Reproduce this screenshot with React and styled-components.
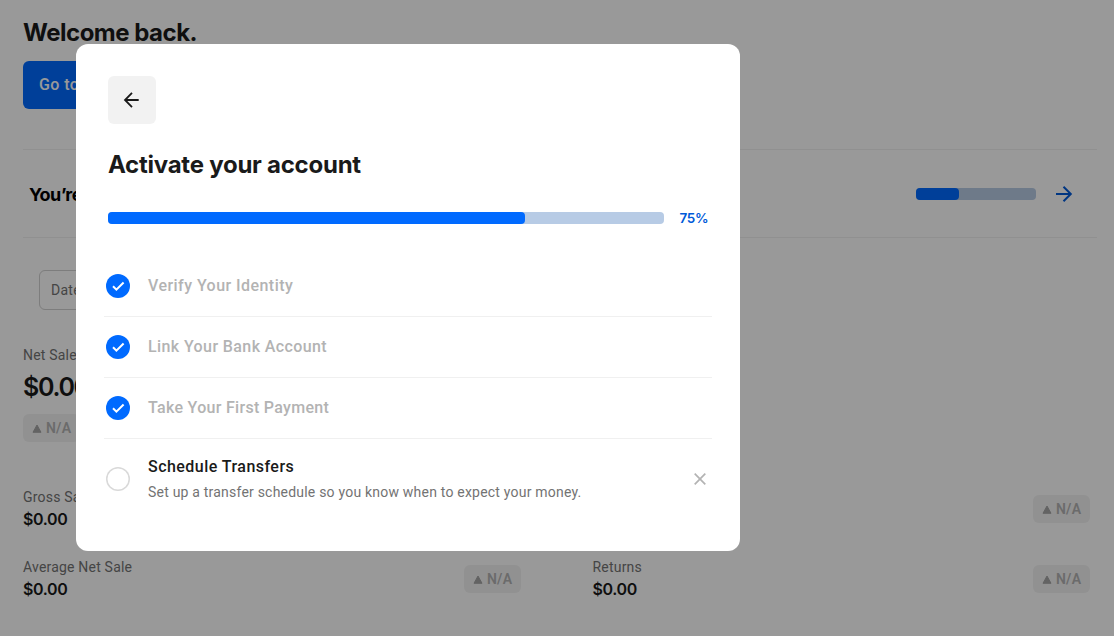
import React from "react";
import styled, { createGlobalStyle } from "styled-components";

const Global = createGlobalStyle`
  * { box-sizing: border-box; }
  html, body, #root { height: 100%; }
  body { margin: 0; background: #fff; overflow: hidden; font-family: Roboto, "Liberation Sans", sans-serif; }
  h1, h2, p, ul { margin: 0; padding: 0; }
`;

const Text = styled.div`
  font-family: ${(p) => (p.$display ? "Inter" : "Roboto")}, "Liberation Sans", sans-serif;
  font-size: ${(p) => p.$size}px;
  line-height: ${(p) => p.$line}px;
  font-weight: ${(p) => p.$weight || 400};
  letter-spacing: ${(p) => p.$track || 0}px;
  color: ${(p) => p.$color || "#1a1a1a"};
  white-space: nowrap;
`;

const Page = styled.main`
  height: 636px;
  padding: 17px 17px 0 23px;
  overflow: hidden;
`;

const PrimaryButton = styled.button`
  display: block;
  width: 150px;
  height: 48px;
  margin: 12px 0 40px;
  padding: 0 16px;
  border: 0;
  border-radius: 6px;
  background: #006aff;
  text-align: left;
`;

const Banner = styled.section`
  display: flex;
  align-items: center;
  height: 89px;
  padding: 0 23px 0 6px;
  border: solid #f0f0f0;
  border-width: 1px 0;
`;

const BannerTitle = styled(Text)`
  padding-top: 2px;
`;

const Track = styled.div`
  width: ${(p) => (p.$width ? `${p.$width}px` : "auto")};
  flex: ${(p) => (p.$width ? "none" : 1)};
  height: 12px;
  border-radius: 4px;
  background: #b7cbe5;
`;

const Fill = styled.div`
  width: ${(p) => p.$value}%;
  height: 100%;
  border-radius: 4px;
  background: #006aff;
`;

const BannerProgress = styled.div`
  display: flex;
  align-items: center;
  gap: 18px;
  margin-left: auto;
`;

const DateField = styled.div`
  display: flex;
  align-items: center;
  width: 180px;
  height: 40px;
  margin: 32px 0 34px 16px;
  padding: 0 11px;
  border: 1px solid #d0d0d0;
  border-radius: 6px;
`;

const Summary = styled.section`
  display: flex;
  flex-direction: column;
  align-items: flex-start;
  height: 142px;
`;

const Chip = styled.span`
  display: flex;
  align-items: center;
  gap: 4px;
  width: 57px;
  height: 28px;
  padding-left: 9px;
  border-radius: 6px;
  background: #f2f2f2;
`;

const SummaryChip = styled.div`
  margin-top: 6px;
`;

const Metrics = styled.section`
  display: grid;
  grid-template-columns: 498px 497.5px;
  grid-auto-rows: 70px;
  column-gap: 71.5px;
`;

const Metric = styled.div`
  display: flex;
  align-items: flex-start;
  justify-content: space-between;
  padding-top: 9px;
`;

const MetricText = styled.div`
  margin-top: -9px;
`;

const Backdrop = styled.div`
  position: fixed;
  inset: 0;
  padding: 44px 0 0 76px;
  background: rgba(0, 0, 0, 0.4);
`;

const Dialog = styled.section`
  width: 664px;
  height: 507px;
  padding: 32px 28px 0;
  border-radius: 12px;
  background: #fff;
`;

const DialogHead = styled.header`
  padding: 0 4px;
`;

const BackButton = styled.button`
  display: flex;
  align-items: center;
  justify-content: center;
  width: 48px;
  height: 48px;
  margin-bottom: 25px;
  padding: 0;
  border: 0;
  border-radius: 6px;
  background: #f2f2f2;
`;

const DialogProgress = styled.div`
  display: flex;
  align-items: center;
  gap: 15.5px;
  height: 20px;
  margin: 27px 0 28px;
`;

const Percent = styled(Text)`
  width: 28.5px;
`;

const Steps = styled.ul`
  list-style: none;
`;

const Step = styled.li`
  display: flex;
  align-items: center;
  gap: 18px;
  height: ${(p) => (p.$open ? 80 : 61)}px;
  padding: 0 4px 0 2px;
  border-bottom: ${(p) => (p.$open ? "0" : "1px solid #f0f0f0")};
`;

const StepBody = styled.div`
  flex: 1;
  padding-bottom: 2px;
`;

const StepMark = styled.span`
  display: flex;
  width: 24px;
  height: 24px;
  border-radius: 50%;
  background: ${(p) => (p.$done ? "#006aff" : "#fff")};
  box-shadow: ${(p) => (p.$done ? "none" : "inset 0 0 0 1.5px #d9d9d9")};
`;

const Icon = styled.svg`
  display: block;
  fill: none;
  stroke: ${(p) => p.$color};
  stroke-width: ${(p) => p.$stroke || 2};
`;

const NotAvailable = () => (
  <Chip>
    <Icon width="10" height="10" viewBox="0 0 10 10" $color="#a5a5a5" $stroke={1} strokeLinejoin="round">
      <path d="M5 2 9 9.3H1Z" fill="#a5a5a5" />
    </Icon>
    <Text as="span" $size={14} $line={28} $weight={600} $track={0.2} $color="#b2b2b2">N/A</Text>
  </Chip>
);

const MetricCell = ({ label }) => (
  <Metric>
    <MetricText>
      {label && (
        <>
          <Text $size={14} $line={22} $track={0.2} $color="#737373">{label}</Text>
          <Text $display $size={16} $line={22} $weight={600} $track={-0.4}>$0.00</Text>
        </>
      )}
    </MetricText>
    <NotAvailable />
  </Metric>
);

const DONE_STEPS = [
  { label: "Verify Your Identity", track: 0.45 },
  { label: "Link Your Bank Account", track: 0.4 },
  { label: "Take Your First Payment", track: 0.3 },
];

export default function App() {
  return (
    <>
      <Global />
      <Page>
        <Text as="h1" $display $size={24} $line={32} $weight={700} $track={-0.5}>Welcome back.</Text>
        <PrimaryButton>
          <Text as="span" $size={16} $line={24} $weight={500} $track={0.4} $color="#fff">Go to</Text>
        </PrimaryButton>
        <Banner>
          <BannerTitle $display $size={18} $line={26} $weight={700} $track={-0.6} $color="#000">You’re</BannerTitle>
          <BannerProgress>
            <Track $width={120}><Fill $value={36} /></Track>
            <Icon width="20" height="20" viewBox="0 0 20 20" $color="#005ad9">
              <path d="M2 10h15M9.5 2.7l7.3 7.3-7.3 7.3" />
            </Icon>
          </BannerProgress>
        </Banner>
        <DateField>
          <Text $size={14} $line={22} $track={0.25} $color="#737373">Date</Text>
        </DateField>
        <Summary>
          <Text $size={14} $line={22} $track={0.2} $color="#737373">Net Sales</Text>
          <Text $display $size={25} $line={42} $weight={600} $track={-1.3}>$0.00</Text>
          <SummaryChip><NotAvailable /></SummaryChip>
        </Summary>
        <Metrics>
          <MetricCell label="Gross Sales" />
          <MetricCell />
          <MetricCell label="Average Net Sale" />
          <MetricCell label="Returns" />
        </Metrics>
      </Page>
      <Backdrop>
        <Dialog role="dialog">
          <DialogHead>
            <BackButton aria-label="Back">
              <Icon width="20" height="20" viewBox="0 0 20 20" $color="#1a1a1a" $stroke={1.8}>
                <path d="M16.7 10H3.5M10 2.8 3 10l7 7.2" />
              </Icon>
            </BackButton>
            <Text as="h2" $display $size={24} $line={32} $weight={700} $track={-0.25}>Activate your account</Text>
            <DialogProgress>
              <Track><Fill $value={75} /></Track>
              <Percent $display $size={13.5} $line={20} $weight={600} $track={-0.3} $color="#005ad9">75%</Percent>
            </DialogProgress>
          </DialogHead>
          <Steps>
            {DONE_STEPS.map(({ label, track }) => (
              <Step key={label}>
                <StepMark $done>
                  <Icon width="24" height="24" viewBox="0 0 24 24" $color="#fff">
                    <path d="m7 12.3 3.4 3.4 7.2-7.2" />
                  </Icon>
                </StepMark>
                <Text $size={16} $line={24} $weight={500} $track={track} $color="#b3b3b3">{label}</Text>
              </Step>
            ))}
            <Step $open>
              <StepMark />
              <StepBody>
                <Text $size={16} $line={28} $weight={500} $track={0.46}>Schedule Transfers</Text>
                <Text $size={14} $line={22} $track={0.21} $color="#737373">
                  Set up a transfer schedule so you know when to expect your money.
                </Text>
              </StepBody>
              <Icon width="16" height="16" viewBox="0 0 16 16" $color="#b3b3b3" $stroke={1.7}>
                <path d="m2.7 2.7 10.6 10.6M13.3 2.7 2.7 13.3" />
              </Icon>
            </Step>
          </Steps>
        </Dialog>
      </Backdrop>
    </>
  );
}
